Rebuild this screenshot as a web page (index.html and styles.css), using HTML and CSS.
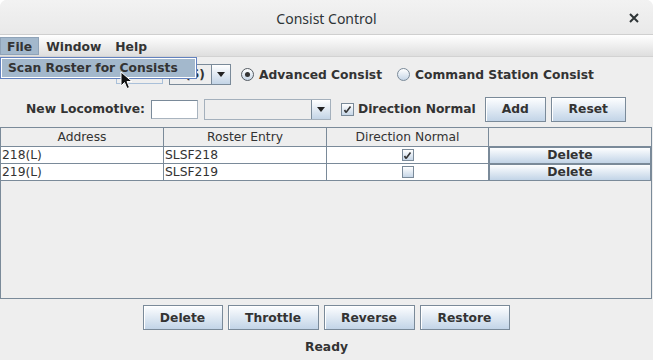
FILE: index.html
```html
<!DOCTYPE html>
<html lang="en">
<head>
    <meta charset="UTF-8">
    <title>Consist Control</title>
    <link rel="stylesheet" href="styles.css">
</head>
<body>

<div class="window">
    <div class="titlebar">
        <span></span>
        <span class="title">Consist Control</span>
        <span class="close">
            <svg width="10" height="10" viewBox="0 0 10 10"><path d="M1 1 L9 9 M9 1 L1 9" stroke="#2e3436" stroke-width="2"/></svg>
        </span>
    </div>

    <div class="menubar">
        <span class="menu active">File</span>
        <span class="menu">Window</span>
        <span class="menu">Help</span>
    </div>

    <div class="row row-top">
        <div class="field faded"></div>
        <div class="combo combo-small">
            <span class="combo-text">(S)</span>
            <span class="combo-arrow"><span class="tri"></span></span>
        </div>
        <label class="radio first"><span class="dot checked"></span>Advanced Consist</label>
        <label class="radio second"><span class="dot"></span>Command Station Consist</label>
    </div>

    <div class="row row-loco">
        <span class="label">New Locomotive:</span>
        <div class="field"></div>
        <div class="combo combo-wide">
            <span class="combo-text"></span>
            <span class="combo-arrow"><span class="tri"></span></span>
        </div>
        <label class="check"><span class="box checked"><svg width="9" height="9" viewBox="0 0 9 9"><path d="M1.5 5 L3 7.5 M3 7.5 L7.5 1.5" stroke="#333" stroke-width="1.6" fill="none"/></svg></span>Direction Normal</label>
        <button class="btn btn-add">Add</button>
        <button class="btn btn-reset">Reset</button>
    </div>

    <div class="table">
        <div class="thead">
            <div class="cell">Address</div>
            <div class="cell">Roster Entry</div>
            <div class="cell">Direction Normal</div>
            <div class="cell"></div>
        </div>
        <div class="trow">
            <div class="cell">218(L)</div>
            <div class="cell">SLSF218</div>
            <div class="cell center"><span class="box small checked"><svg width="9" height="9" viewBox="0 0 9 9"><path d="M1.5 5 L3 7.5 M3 7.5 L7.5 1.5" stroke="#333" stroke-width="1.6" fill="none"/></svg></span></div>
            <div class="cell"><span class="row-btn">Delete</span></div>
        </div>
        <div class="trow">
            <div class="cell">219(L)</div>
            <div class="cell">SLSF219</div>
            <div class="cell center"><span class="box small"></span></div>
            <div class="cell"><span class="row-btn">Delete</span></div>
        </div>
    </div>

    <div class="actions">
        <button class="btn w80">Delete</button>
        <button class="btn w91">Throttle</button>
        <button class="btn w91">Reverse</button>
        <button class="btn w90">Restore</button>
    </div>

    <div class="status">Ready</div>

    <!-- open File menu and mouse pointer sit over the form -->
    <div class="popup">
        <div class="popup-item">Scan Roster for Consists</div>
    </div>
    <svg class="pointer" width="14" height="20" viewBox="0 0 14 20">
        <path d="M1 1 L1 15 L4.5 11.5 L7 17.5 L9.5 16.5 L7 10.5 L12 10.5 Z" fill="#111" stroke="#fff" stroke-width="1"/>
    </svg>
</div>

</body>
</html>
```

FILE: styles.css
```css
body {
    margin: 0;
    background: #ffffff;
    font-family: "DejaVu Sans", sans-serif;
    font-size: 12.3px;
    color: #333333;
}

.window {
    position: relative;
    width: 653px;
    height: 360px;
    background: #eeeeee;
    border-radius: 7px 7px 0 0;
    overflow: hidden;
}

.titlebar {
    height: 35px;
    box-sizing: border-box;
    padding-top: 2px;
    display: grid;
    grid-template-columns: 1fr auto 1fr;
    align-items: center;
    background: linear-gradient(#f2f2f2, #e9e9e9);
    border-bottom: 1px solid #cfcfcf;
}

.title {
    font-family: "Noto Sans", sans-serif;
    font-size: 14px;
    color: #2e3436;
}

.close {
    justify-self: end;
    margin-right: 14px;
    height: 10px;
}

.close svg {
    display: block;
}

.menubar {
    height: 21px;
    display: flex;
    align-items: stretch;
    background: linear-gradient(#ffffff, #dedede);
    border-bottom: 1px solid #d2d2d2;
}

.menu {
    margin: 2px 0 1px;
    padding: 1px 6px 0;
    font-weight: bold;
    display: flex;
    align-items: center;
    border: 1px solid transparent;
}

.menu.active {
    background: #a3b8cc;
    border-color: #8fa3b8;
}

.row {
    display: flex;
    align-items: center;
}

.row-top {
    height: 35px;
    padding-left: 116px;
}

.row-loco {
    height: 34px;
    padding-left: 26px;
}

.label {
    font-weight: bold;
    margin-right: 6px;
}

.field {
    width: 47px;
    height: 19px;
    box-sizing: border-box;
    background: #ffffff;
    border: 1px solid #7a8a99;
    border-right-color: #a9b4bf;
    border-bottom-color: #a9b4bf;
}

.field.faded {
    background: #eeeeee;
    border-color: #a9c0d9;
}

.combo {
    height: 21px;
    box-sizing: border-box;
    margin-left: 6px;
    display: flex;
    border: 1px solid #7a8a99;
    background: #eeeeee;
}

.combo-small {
    width: 62px;
}

.combo-wide {
    width: 127px;
    border-color: #a4b0bc;
}

.combo-text {
    flex: 1;
    font-weight: bold;
    text-align: right;
    padding-right: 6px;
    line-height: 19px;
}

.combo-arrow {
    width: 18px;
    border-left: 1px solid #7a8a99;
    background: linear-gradient(#ffffff, #c3d4e6);
    display: flex;
    align-items: center;
    justify-content: center;
}

.tri {
    width: 0;
    height: 0;
    border-left: 4px solid transparent;
    border-right: 4px solid transparent;
    border-top: 5px solid #222;
}

.radio,
.check {
    display: flex;
    align-items: center;
    font-weight: bold;
}

.radio.first {
    margin-left: 10px;
}

.radio.second {
    margin-left: 15px;
}

.dot {
    width: 13px;
    height: 13px;
    box-sizing: border-box;
    border-radius: 50%;
    border: 1px solid #7a8a99;
    background: linear-gradient(#ffffff, #c6d6e7);
    margin-right: 5px;
    display: flex;
    align-items: center;
    justify-content: center;
}

.dot.checked {
    border-color: #555c63;
}

.dot.checked::after {
    content: "";
    width: 5px;
    height: 5px;
    border-radius: 50%;
    background: #333;
}

.check {
    margin-left: 10px;
}

.box {
    width: 13px;
    height: 13px;
    box-sizing: border-box;
    border: 1px solid #7a8a99;
    background: linear-gradient(#ffffff, #c6d6e7);
    margin-right: 4px;
    display: flex;
    align-items: center;
    justify-content: center;
}

.box.small {
    width: 12px;
    height: 12px;
    margin: 0;
}

.box svg {
    display: block;
}

.btn {
    height: 25px;
    box-sizing: border-box;
    border: 1px solid #7a8a99;
    background: linear-gradient(#fdfeff, #c2d4e7);
    box-shadow: inset 1px 1px #ffffff;
    font-family: "DejaVu Sans", sans-serif;
    font-size: 12.3px;
    font-weight: bold;
    color: #333333;
    padding: 0;
}

.btn-add {
    width: 61px;
    margin-left: 9px;
}

.btn-reset {
    width: 75px;
    margin-left: 5px;
}

.table {
    margin-top: 1px;
    width: 652px;
    height: 172px;
    box-sizing: border-box;
    border: 1px solid #7a8a99;
    background: #eeeeee;
}

.thead,
.trow {
    display: grid;
    grid-template-columns: 163px 163px 162px 1fr;
}

.thead {
    height: 19px;
    box-sizing: border-box;
    border-bottom: 1px solid #7a8a99;
}

.thead .cell {
    text-align: center;
    line-height: 18px;
    border-right: 1px solid #7a8a99;
}

.thead .cell:last-child {
    border-right: none;
}

.trow {
    height: 17px;
    box-sizing: border-box;
    border-bottom: 1px solid #7a8a99;
    background: #ffffff;
}

.trow .cell {
    border-right: 1px solid #7a8a99;
    line-height: 16px;
    padding-left: 1px;
}

.trow .cell:last-child {
    border-right: none;
    padding: 0;
    display: flex;
}

.cell.center {
    display: flex;
    align-items: center;
    justify-content: center;
    padding: 0;
}

.row-btn {
    flex: 1;
    border: 1px solid #7a8a99;
    border-width: 1px 1px 0 1px;
    background: linear-gradient(#fdfeff, #c2d4e7);
    text-align: center;
    font-weight: bold;
    line-height: 15px;
}

.actions {
    display: flex;
    justify-content: center;
    gap: 5px;
    margin-top: 6px;
    padding-right: 1px;
}

.w80 { width: 80px; }
.w91 { width: 91px; }
.w90 { width: 90px; }

.status {
    margin-top: 10px;
    text-align: center;
    font-weight: bold;
    line-height: 15px;
}

.popup {
    position: absolute;
    left: 0;
    top: 57px;
    width: 197px;
    height: 22px;
    box-sizing: border-box;
    border: 1px solid #6382bf;
    background: #ffffff;
    padding: 1px;
}

.popup-item {
    height: 18px;
    background: #a3b8cc;
    font-weight: bold;
    line-height: 18px;
    padding-left: 6px;
}

.pointer {
    position: absolute;
    left: 120px;
    top: 71px;
}
```
